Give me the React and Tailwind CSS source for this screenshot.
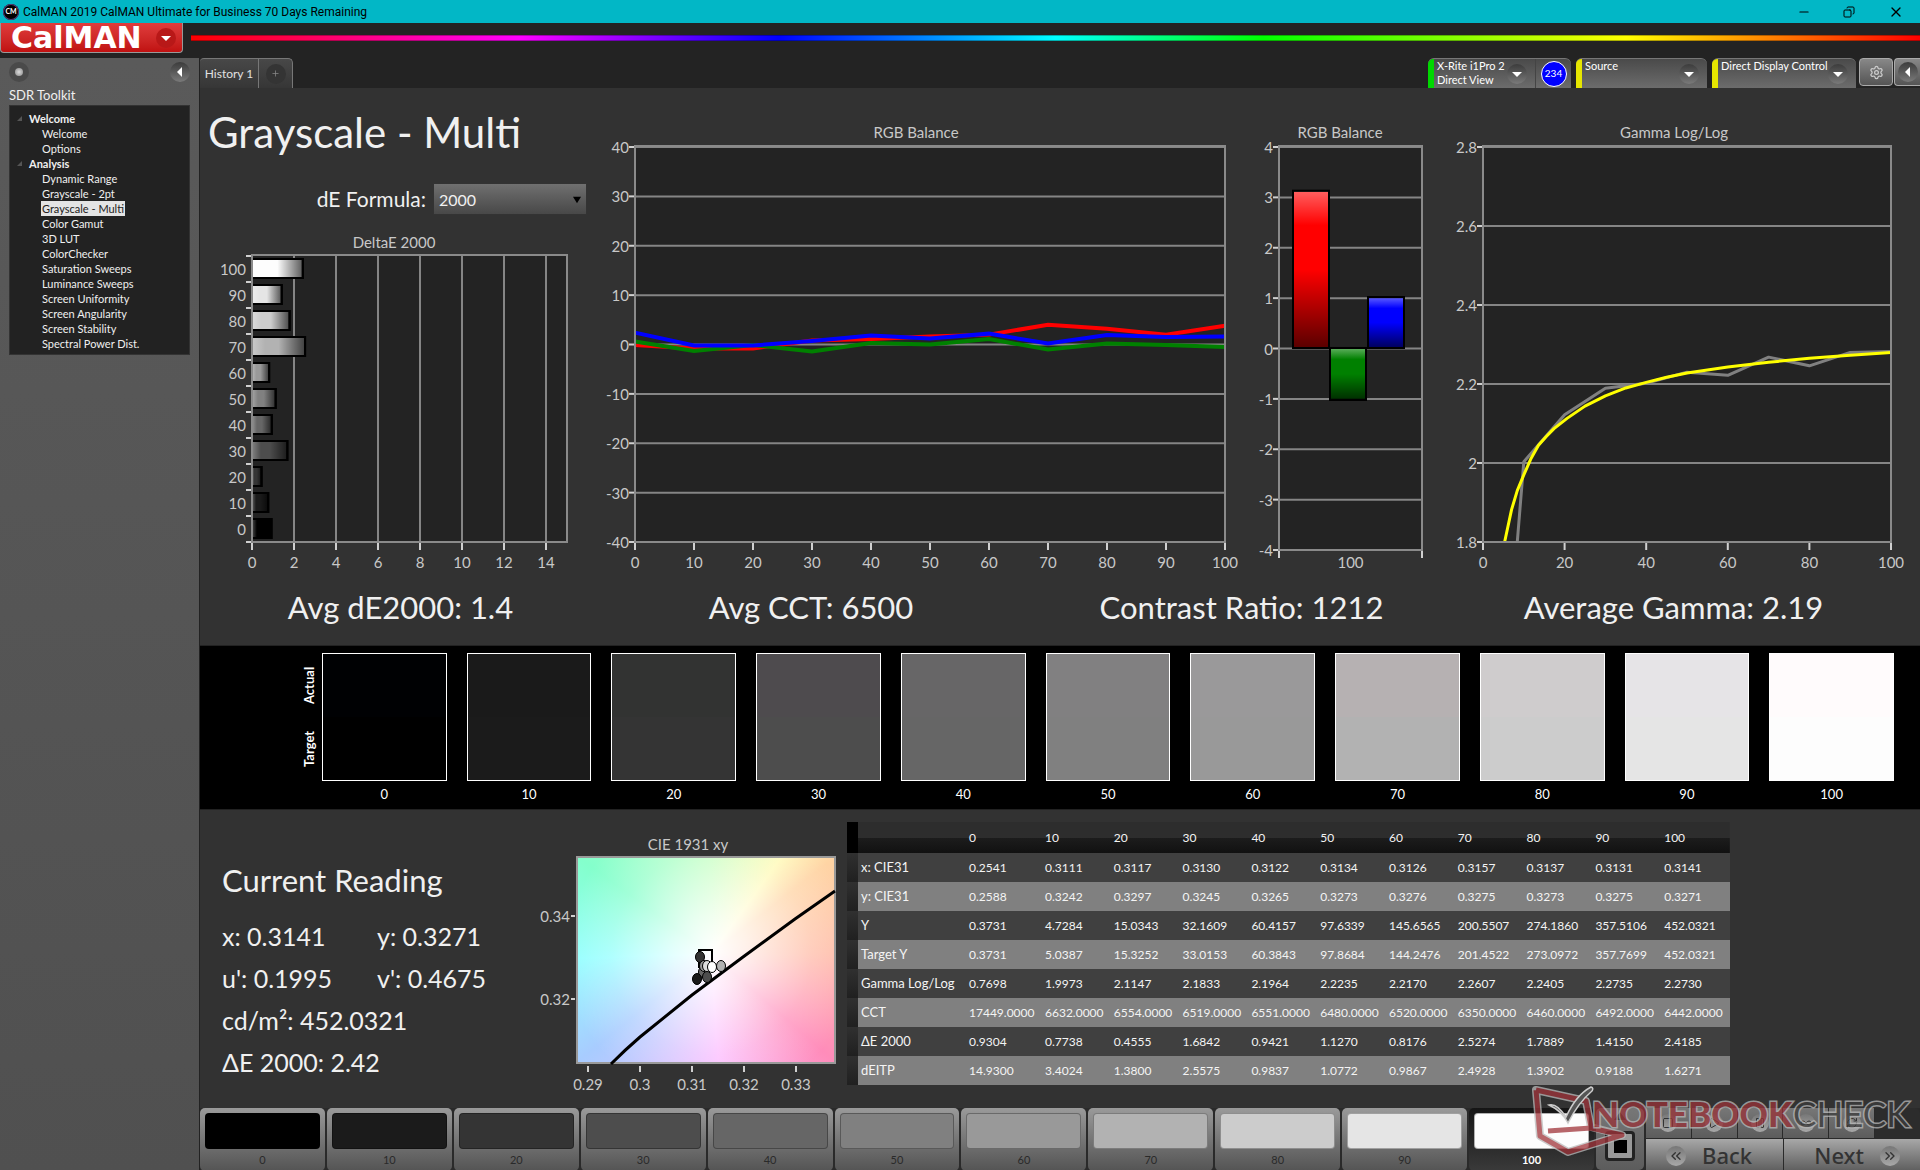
import React, { useState } from "react";
import {
  ChevronsLeft,
  ChevronsRight,
  Copy,
  Infinity as Loop,
  Minus,
  Pause,
  Play,
  Plus,
  RefreshCw,
  Settings,
  Square,
  X,
} from "lucide-react";

const tree = [
  { name: "Welcome", items: ["Welcome", "Options"] },
  {
    name: "Analysis",
    items: [
      "Dynamic Range",
      "Grayscale - 2pt",
      "Grayscale - Multi",
      "Color Gamut",
      "3D LUT",
      "ColorChecker",
      "Saturation Sweeps",
      "Luminance Sweeps",
      "Screen Uniformity",
      "Screen Angularity",
      "Screen Stability",
      "Spectral Power Dist.",
    ],
  },
];

const levels = [
  { level: 0, actual: "#000103", target: "#000000", de: 0.9304 },
  { level: 10, actual: "#1a1a1a", target: "#1b1b1b", de: 0.7738 },
  { level: 20, actual: "#323332", target: "#343434", de: 0.4555 },
  { level: 30, actual: "#4e4b4e", target: "#4d4d4d", de: 1.6842 },
  { level: 40, actual: "#676667", target: "#666666", de: 0.9421 },
  { level: 50, actual: "#818081", target: "#808080", de: 1.127 },
  { level: 60, actual: "#9a999a", target: "#999999", de: 0.8176 },
  { level: 70, actual: "#b6b1b2", target: "#b2b2b2", de: 2.5274 },
  { level: 80, actual: "#cfcccd", target: "#cccccc", de: 1.7889 },
  { level: 90, actual: "#e6e4e7", target: "#e5e5e5", de: 1.415 },
  { level: 100, actual: "#fffbfc", target: "#fdfdfd", de: 2.4185 },
];

const rows = [
  ["x: CIE31", "0.2541", "0.3111", "0.3117", "0.3130", "0.3122", "0.3134", "0.3126", "0.3157", "0.3137", "0.3131", "0.3141"],
  ["y: CIE31", "0.2588", "0.3242", "0.3297", "0.3245", "0.3265", "0.3273", "0.3276", "0.3275", "0.3273", "0.3275", "0.3271"],
  ["Y", "0.3731", "4.7284", "15.0343", "32.1609", "60.4157", "97.6339", "145.6565", "200.5507", "274.1860", "357.5106", "452.0321"],
  ["Target Y", "0.3731", "5.0387", "15.3252", "33.0153", "60.3843", "97.8684", "144.2476", "201.4522", "273.0972", "357.7699", "452.0321"],
  ["Gamma Log/Log", "0.7698", "1.9973", "2.1147", "2.1833", "2.1964", "2.2235", "2.2170", "2.2607", "2.2405", "2.2735", "2.2730"],
  ["CCT", "17449.0000", "6632.0000", "6554.0000", "6519.0000", "6551.0000", "6480.0000", "6520.0000", "6350.0000", "6460.0000", "6492.0000", "6442.0000"],
  ["ΔE 2000", "0.9304", "0.7738", "0.4555", "1.6842", "0.9421", "1.1270", "0.8176", "2.5274", "1.7889", "1.4150", "2.4185"],
  ["dEITP", "14.9300", "3.4024", "1.3800", "2.5575", "0.9837", "1.0772", "0.9867", "2.4928", "1.3902", "0.9188", "1.6271"],
];

const balance = [
  { color: "#ff0000", values: [-0.1, -0.8, -0.8, 0.8, 1.1, 1.6, 2, 4, 3.2, 2, 3.8] },
  { color: "#008000", values: [0.6, -1.3, -0.1, -1.4, 0.3, 0, 1.1, -1, 0.2, -0.1, -0.5] },
  { color: "#0000ff", values: [2.4, -0.2, -0.2, 0.7, 1.8, 1.2, 2.2, 0.2, 1.9, 1.5, 1.6] },
];

const gammaTarget = [
  [5.3, 1.8], [7, 1.882], [8.4, 1.93], [10, 1.97], [11.7, 2.01], [13.6, 2.045], [15.4, 2.066], [17.4, 2.087],
  [20.6, 2.113], [25, 2.144], [30, 2.17], [35, 2.19], [40, 2.204], [45, 2.217], [50, 2.228], [60, 2.243],
  [70, 2.255], [80, 2.265], [90, 2.273], [100, 2.28],
];
const gammaMeasured = [
  [8.4, 1.8], [10, 2.003], [20, 2.122], [30, 2.189], [40, 2.202], [50, 2.23], [60, 2.222],
  [70, 2.268], [80, 2.246], [90, 2.28], [100, 2.282],
];

const range = (from, to, step) => {
  const out = [];
  for (let v = from; v <= to + step / 1000; v += step) out.push(Math.round(v * 100) / 100);
  return out;
};

function Chart({ w, h, title, titleX, plot, x, y, labelY, children }) {
  const [px, py, pw, ph] = plot;
  const sx = (v) => px + ((v - x.min) / (x.max - x.min)) * pw;
  const sy = (v) => py + ph - ((v - y.min) / (y.max - y.min)) * ph;

  return (
    <svg viewBox={`0 0 ${w} ${h}`} className="w-full h-auto block" role="img" aria-label={title}>
      <defs>
        <linearGradient id="shineX">
          <stop offset="0" stopColor="#fff" stopOpacity="0.3" />
          <stop offset="0.25" stopColor="#fff" stopOpacity="0" />
          <stop offset="0.5" stopColor="#000" stopOpacity="0" />
          <stop offset="1" stopColor="#000" stopOpacity="0.65" />
        </linearGradient>
        <linearGradient id="shineY" x2="0" y2="1">
          <stop offset="0" stopColor="#fff" stopOpacity="0.38" />
          <stop offset="0.22" stopColor="#fff" stopOpacity="0" />
          <stop offset="0.5" stopColor="#000" stopOpacity="0" />
          <stop offset="1" stopColor="#000" stopOpacity="0.65" />
        </linearGradient>
      </defs>
      <text x={titleX} y="18" textAnchor="middle" fontSize="15" fill="#c8c8c8">
        {title}
      </text>
      <rect x={px} y={py} width={pw} height={ph} fill="#232323" />
      <g stroke="#858585" strokeWidth="2">
        {x.grid && x.ticks.map((v) => <path key={v} d={`M${sx(v)} ${py}V${py + ph}`} />)}
        {y.grid && y.ticks.map((v) => <path key={v} d={`M${px} ${sy(v)}H${px + pw}`} />)}
      </g>
      {children(sx, sy)}
      <rect x={px} y={py - 1} width={pw} height={ph + 1} fill="none" stroke="#8a8a8a" strokeWidth="2" />
      <g stroke="#d0d0d0" strokeWidth="2">
        {(x.marks ?? x.ticks).map((v) => <path key={v} d={`M${sx(v)} ${py + ph + 1}v7`} />)}
        {(y.marks ?? y.ticks).map((v) => <path key={v} d={`M${px - 1} ${sy(v)}h-5`} />)}
      </g>
      <g fontSize="15" fill="#c8c8c8">
        {x.ticks.map((v) => (
          <text key={v} x={sx(v)} y={labelY} textAnchor="middle">{v}</text>
        ))}
        {y.ticks.map((v) => (
          <text key={v} x={px - 6} y={sy(v) + 6} textAnchor="end">{v}</text>
        ))}
      </g>
    </svg>
  );
}

function DeltaChart() {
  return (
    <Chart
      w={390} h={350} title="DeltaE 2000" titleX={194} plot={[52, 26, 315, 286]} labelY={338}
      x={{ min: 0, max: 15, ticks: range(0, 14, 2), grid: true }}
      y={{ min: -5, max: 105, ticks: range(0, 100, 10), marks: range(-5, 105, 10) }}
    >
      {(sx, sy) =>
        levels.map(({ level, target, de }) => (
          <g key={level} stroke="#000" strokeWidth="2">
            <rect x={sx(0)} y={sy(level) - 10} width={sx(de) - sx(0)} height="19" fill={target} />
            <rect x={sx(0)} y={sy(level) - 10} width={sx(de) - sx(0)} height="19" fill="url(#shineX)" />
          </g>
        ))
      }
    </Chart>
  );
}

function BalanceChart() {
  return (
    <Chart
      w={650} h={460} title="RGB Balance" titleX={326} plot={[45, 27, 590, 395]} labelY={448}
      x={{ min: 0, max: 100, ticks: range(0, 100, 10) }}
      y={{ min: -40, max: 40, ticks: range(-40, 40, 10), grid: true }}
    >
      {(sx, sy) =>
        balance.map(({ color, values }) => (
          <polyline
            key={color}
            points={values.map((v, i) => `${sx(i * 10)},${sy(v)}`).join(" ")}
            fill="none" stroke={color} strokeWidth="4"
          />
        ))
      }
    </Chart>
  );
}

function BalanceBars() {
  const bars = [
    { color: "#ff0000", from: 3.13, to: 0.01, at: 14 },
    { color: "#008000", from: 0.01, to: -1.02, at: 51 },
    { color: "#0000ff", from: 1.02, to: 0.01, at: 89 },
  ];
  return (
    <Chart
      w={200} h={460} title="RGB Balance" titleX={100} plot={[39, 27, 143, 403]} labelY={448}
      x={{ min: 99, max: 101, ticks: [100], marks: [99, 101] }}
      y={{ min: -4, max: 4, ticks: range(-4, 4, 1), grid: true }}
    >
      {(sx, sy) =>
        bars.map(({ color, from, to, at }) => (
          <g key={color} stroke="#000" strokeWidth="2">
            <rect x={39 + at} y={sy(from)} width="36" height={sy(to) - sy(from)} fill={color} />
            <rect x={39 + at} y={sy(from)} width="36" height={sy(to) - sy(from)} fill="url(#shineY)" />
          </g>
        ))
      }
    </Chart>
  );
}

function GammaChart() {
  return (
    <Chart
      w={480} h={460} title="Gamma Log/Log" titleX={234} plot={[43, 27, 408, 395]} labelY={448}
      x={{ min: 0, max: 100, ticks: range(0, 100, 20) }}
      y={{ min: 1.8, max: 2.8, ticks: range(1.8, 2.8, 0.2), grid: true }}
    >
      {(sx, sy) => (
        <g fill="none" strokeWidth="3" strokeLinejoin="round">
          <polyline points={gammaMeasured.map(([a, b]) => `${sx(a)},${sy(b)}`).join(" ")} stroke="#808080" />
          <polyline points={gammaTarget.map(([a, b]) => `${sx(a)},${sy(b)}`).join(" ")} stroke="#ffff00" />
        </g>
      )}
    </Chart>
  );
}

function CieChart() {
  const points = [
    [173, 142, "#666"], [177, 147, "#4d4d4d"], [167, 149, "#1a1a1a"], [170, 127, "#333"],
    [174, 136, "#999"], [191, 136, "#b2b2b2"], [177, 136, "#ddd"], [182, 137, "#fff"],
  ];
  return (
    <svg viewBox="0 0 317 270" className="w-full h-auto block" role="img" aria-label="CIE 1931 xy">
      <text x="158" y="20" textAnchor="middle" fontSize="15" fill="#c8c8c8">CIE 1931 xy</text>
      <foreignObject x="47" y="27" width="258" height="206">
        <div className="h-full bg-[radial-gradient(circle_at_52%_47%,#fff_0%,rgba(255,255,255,0.75)_22%,rgba(255,255,255,0.25)_58%,transparent_85%),conic-gradient(from_0deg_at_52%_47%,#c4ffc0,#fffab8_36deg,#ffd4a4_52deg,#ffbca8_90deg,#ff8cba_131deg,#fcbcff_176deg,#a8ccff_231deg,#94ffff_268deg,#84ffcc_306deg,#c4ffc0)]" />
      </foreignObject>
      <rect x="47" y="27" width="258" height="206" fill="none" stroke="#999" strokeWidth="2" />
      <path d="M81 234Q96 219 110 207L162 165L213 127L265 89L305 61" fill="none" stroke="#000" strokeWidth="3" />
      <rect x="169" y="120" width="13" height="17" fill="none" stroke="#000" strokeWidth="2" />
      {points.map(([cx, cy, fill]) => (
        <ellipse key={`${cx}-${cy}`} cx={cx} cy={cy} rx="4.5" ry="5.5" fill={fill} stroke="#000" />
      ))}
      <path d="M45 86h-4M45 169h-4M58 236v6M110 236v6M162 236v6M214 236v6M266 236v6" stroke="#d0d0d0" strokeWidth="2" />
      <g fontSize="15" fill="#c8c8c8">
        <text x="40" y="92" textAnchor="end">0.34</text>
        <text x="40" y="175" textAnchor="end">0.32</text>
        {["0.29", "0.3", "0.31", "0.32", "0.33"].map((label, i) => (
          <text key={label} x={58 + i * 52} y="260" textAnchor="middle">{label}</text>
        ))}
      </g>
    </svg>
  );
}

function Arrow({ left }) {
  return (
    <span className="flex shrink-0 size-5 items-center justify-center rounded-full bg-linear-to-b from-[#3c3c3c] to-[#7a7a7a]">
      <svg viewBox="0 0 10 10" className="size-[10px]" fill="#fff">
        <path d={left ? "M7 0V10L2 5Z" : "M0 3H10L5 8Z"} />
      </svg>
    </span>
  );
}

function TitleBar() {
  return (
    <header className="flex h-[23px] items-center bg-[#02b7c6] pl-[3px] text-black">
      <span className="flex size-4 items-center justify-center rounded-full bg-black text-[7px] font-bold text-white ring-1 ring-[#5a3d7a] ring-inset">
        CM
      </span>
      <h1 className="ml-1 flex-1 font-['Roboto',sans-serif] text-[12px]">
        CalMAN 2019 CalMAN Ultimate for Business 70 Days Remaining
      </h1>
      <button aria-label="Minimize" className="flex w-[45px] justify-center"><Minus size={14} strokeWidth={2} /></button>
      <button aria-label="Restore" className="flex w-[45px] justify-center"><Copy size={12} strokeWidth={2} className="-scale-x-100" /></button>
      <button aria-label="Close" className="flex w-[49px] justify-center"><X size={16} strokeWidth={2} /></button>
    </header>
  );
}

function Device({ color, label, sub, width, children }) {
  return (
    <div className={`flex h-[30px] overflow-hidden rounded-t-md border-t border-[#777] bg-linear-to-b from-[#4a4a4a] to-[#6c6c6c] ${width}`}>
      <span className={`w-[6px] shrink-0 ${color}`} />
      <button className="flex flex-1 items-center justify-between pl-[3px] pr-2 text-left">
        <span className="self-start text-[11px] leading-[14px] whitespace-nowrap text-white">
          {label}
          <br />
          {sub}
        </span>
        <Arrow />
      </button>
      {children}
    </div>
  );
}

function Sidebar({ page, setPage }) {
  return (
    <aside className="w-[200px] shrink-0 border-r border-[#222] bg-linear-to-b from-[#5a5a5a] to-[#505050] px-[9px] pt-1 text-[#f0f0f0]">
      <div className="flex items-center justify-between">
        <button aria-label="Record" className="flex size-5 items-center justify-center rounded-full bg-[#4a4a4a]">
          <span className="size-2 rounded-full bg-radial from-[#ddd] to-[#888]" />
        </button>
        <button aria-label="Collapse"><Arrow left /></button>
      </div>
      <h2 className="mt-1 text-[13px] leading-[19px]">SDR Toolkit</h2>
      <nav className="h-[250px] border border-[#333] bg-[#222] pt-[5px] text-[11px] leading-[15px]">
        {tree.map(({ name, items }) => (
          <div key={name}>
            <h3 className="flex items-center font-bold">
              <svg viewBox="0 0 5 5" className="mx-[7px] size-[5px]" fill="#555"><path d="M5 0V5H0Z" /></svg>
              {name}
            </h3>
            <ul className="pl-[31px]">
              {items.map((item) => (
                <li key={item} className="flex h-[15px]">
                  <a
                    href="#page"
                    onClick={() => setPage(item)}
                    className={`px-px whitespace-nowrap ${item === page ? "bg-[#e4e4e4] text-[#222]" : ""}`}
                  >
                    {item}
                  </a>
                </li>
              ))}
            </ul>
          </div>
        ))}
      </nav>
    </aside>
  );
}

function Swatches() {
  return (
    <section className="flex h-[165px] gap-[4px] border-y border-[#222] bg-black pt-[7px] pr-[26px] pl-[100px] text-white">
      <div className="flex h-[128px] w-[18px] rotate-180 justify-around text-[13px] leading-[18px] font-bold [writing-mode:vertical-rl]">
        <span>Target</span>
        <span>Actual</span>
      </div>
      <div className="grid flex-1 grid-cols-11 gap-5">
        {levels.map(({ level, actual, target }) => (
          <figure key={level}>
            <div className="h-[128px] border border-white">
              <div className="h-1/2" style={{ background: actual }} />
              <div className="h-1/2" style={{ background: target }} />
            </div>
            <figcaption className="pt-[4px] text-center text-[13px] leading-[18px]">{level}</figcaption>
          </figure>
        ))}
      </div>
    </section>
  );
}

function Reading() {
  return (
    <div className="pt-[49px] pl-[22px] text-[25px] leading-[42px] text-[#f0f0f0]">
      <h2 className="mb-[14px] text-[31px]">Current Reading</h2>
      <div className="grid grid-cols-[155px_1fr] whitespace-nowrap">
        <span>x: 0.3141</span>
        <span>y: 0.3271</span>
        <span>u': 0.1995</span>
        <span>v': 0.4675</span>
      </div>
      <p>cd/m²: 452.0321</p>
      <p>ΔE 2000: 2.42</p>
    </div>
  );
}

function DataTable() {
  return (
    <table className="mt-[12px] w-full table-fixed self-start text-left text-[12px] whitespace-nowrap text-[#f4f4f4]">
      <colgroup>
        <col className="w-[11px]" />
        <col className="w-[108px]" />
        <col className="w-[76px]" />
      </colgroup>
      <thead>
        <tr className="h-[31px] bg-[linear-gradient(#2d2d2d_50%,#1c1c1c_52%,#111)]">
          <td className="bg-black" />
          <td />
          {levels.map(({ level }) => (
            <th key={level} scope="col" className="pl-[3px] font-normal">{level}</th>
          ))}
        </tr>
      </thead>
      <tbody>
        {rows.map(([name, ...values]) => (
          <tr key={name} className="h-[29px] odd:bg-[#404040] even:bg-[#808080]">
            <td className="bg-linear-to-b from-[#303030] to-[#202020]" />
            <th scope="row" className="pl-[3px] text-[13px] font-normal">{name}</th>
            {values.map((v, i) => (
              <td key={i} className="pl-[3px]">{v}</td>
            ))}
          </tr>
        ))}
      </tbody>
    </table>
  );
}

function Watermark() {
  return (
    <svg viewBox="0 0 390 77" className="pointer-events-none absolute right-0 bottom-[10px] w-[390px]" aria-label="Notebookcheck">
      <g fill="none" strokeLinejoin="round" opacity="0.75">
        <path d="M6 7L56 18L61 44L92 52L38 69L10 53Z" stroke="#bbb" strokeWidth="8" />
        <path d="M6 7L56 18L61 44M6 7L10 53L38 69L92 52L61 45L18 48" stroke="#a0343a" strokeWidth="5" />
      </g>
      <path d="M19 22Q27 20 36 34Q46 12 61 4Q64 5 62 8Q48 20 38 40Q32 28 19 22Z" fill="#555" stroke="#ccc" strokeWidth="1.5" />
      <g fontSize="35" stroke="#b8b8b8" strokeWidth="3" paintOrder="stroke">
        <text x="62" y="44" fontWeight="900" fill="#993238" opacity="0.75">NOTEBOOK</text>
        <text x="263" y="44" fill="#3c3c3c" opacity="0.75">CHECK</text>
      </g>
    </svg>
  );
}

function RoundIcon({ icon: Icon, size = 12, big }) {
  return (
    <span className={`flex items-center justify-center rounded-full bg-linear-to-b from-[#777] to-[#a8a8a8] text-[#333] ${big ? "size-5" : "size-[18px]"}`}>
      <Icon size={size} />
    </span>
  );
}

function Toolbar() {
  const [level, setLevel] = useState(100);
  const controls = [
    ["Stop", Square],
    ["Play", Play],
    ["Pause", Pause],
    ["Loop", Loop],
    ["Refresh", RefreshCw],
  ];
  return (
    <footer className="relative flex h-[62px] bg-[#2a2a2a]">
      <div className="grid flex-1 grid-cols-11 gap-[2px]">
        {levels.map(({ level: l, target }) => (
          <button
            key={l}
            onClick={() => setLevel(l)}
            className={`flex flex-col rounded-[5px] px-[5px] pt-[5px] text-[11px] leading-[22px] ${
              l === level
                ? "bg-linear-to-b from-[#151515] to-[#3a3a3a] font-bold text-white"
                : "bg-linear-to-b from-[#9a9a9a] to-[#545454] text-[#2a2a2a]"
            }`}
          >
            <span className="h-9 w-full rounded-[4px] border border-black/30" style={{ background: target }} />
            <span className="w-full text-center">{l}</span>
          </button>
        ))}
      </div>
      <div className="ml-[2px] flex w-[48px] flex-col items-center gap-[11px] rounded-[5px] bg-linear-to-b from-[#777] to-[#5c5c5c] pt-1">
        <svg viewBox="0 0 12 8" className="h-2 w-3" fill="#333"><path d="M6 0L12 8H0Z" /></svg>
        <button aria-label="Read" className="flex size-[30px] items-center justify-center rounded-[4px] border-[3px] border-[#222] bg-[#999]">
          <span className="size-[13px] bg-black" />
        </button>
      </div>
      <div className="ml-[2px] flex w-[274px] flex-col gap-px">
        <div className="grid h-[30px] grid-cols-6 gap-px">
          {controls.map(([name, icon]) => (
            <button key={name} aria-label={name} className="flex items-center justify-center bg-linear-to-b from-[#777] to-[#5c5c5c]">
              <RoundIcon icon={icon} />
            </button>
          ))}
          <span className="rounded-tr-[5px] bg-[#2c2c2c]" />
        </div>
        <div className="grid h-[30px] grid-cols-2 gap-px font-['Noto_Sans',sans-serif] text-[22px] font-medium text-[#333]">
          <button className="flex items-center gap-4 bg-linear-to-b from-[#a8a8a8] to-[#5c5c5c] pl-5">
            <RoundIcon icon={ChevronsLeft} size={16} big />
            Back
          </button>
          <button className="flex items-center justify-end gap-4 bg-linear-to-b from-[#a8a8a8] to-[#5c5c5c] pr-5">
            Next
            <RoundIcon icon={ChevronsRight} size={16} big />
          </button>
        </div>
      </div>
      <Watermark />
    </footer>
  );
}

export default function App() {
  const [page, setPage] = useState("Grayscale - Multi");
  const [formula, setFormula] = useState("2000");

  return (
    <div className="flex min-h-screen flex-col bg-[#232323] font-[Lato,'Open_Sans',sans-serif]">
      <TitleBar />
      <div className="flex h-[35px] items-start gap-2">
        <button className="flex h-[30px] w-[183px] items-center justify-between rounded-b-[4px] border border-t-0 border-[#999] bg-linear-to-b from-[#e03c3c] to-[#c01010] pr-[6px] pl-[10px] font-['DejaVu_Sans',sans-serif] text-[30px] leading-none font-bold text-white">
          CalMAN
          <span className="flex size-5 items-center justify-center rounded-full bg-[#b81818]">
            <svg viewBox="0 0 10 10" className="size-[10px]" fill="#fff"><path d="M0 3H10L5 8Z" /></svg>
          </span>
        </button>
        <div className="mt-3 h-[6px] flex-1 border-y border-black/30 bg-[linear-gradient(90deg,#f00,#f0f_19%,#00f_34%,#0ff_50%,#0f0_62%,#ff0_83%,#f00)]" />
      </div>

      <div className="flex flex-1">
        <Sidebar page={page} setPage={setPage} />
        <main className="flex min-w-0 flex-1 flex-col bg-[#323232]">
          <div className="flex h-[30px] bg-[#232323] text-[12px] text-[#e0e0e0]">
            <button className="w-[59px] rounded-tl-[4px] border-t border-r border-[#777] bg-linear-to-b from-[#484848] to-[#363636] whitespace-nowrap">
              History 1
            </button>
            <button aria-label="Add tab" className="flex w-[34px] items-center justify-center rounded-tr-[5px] border-t border-r border-[#777] bg-linear-to-b from-[#484848] to-[#363636]">
              <span className="flex size-5 items-center justify-center rounded-full bg-[#343434] text-[#888]">
                <Plus size={9} />
              </span>
            </button>
            <div className="ml-auto flex gap-[3px]">
              <div className="flex gap-[5px]">
                <Device color="bg-[#00d800]" label="X-Rite i1Pro 2" sub="Direct View" width="w-[143px]">
                  <span className="flex w-9 items-center justify-center border-l border-[#444]">
                    <span className="flex size-[26px] items-center justify-center rounded-full border border-white bg-[#0000ff] text-[10px] text-white">
                      234
                    </span>
                  </span>
                </Device>
                <Device color="bg-[#e6e600]" label="Source" width="w-[131px]" />
                <Device color="bg-[#e6e600]" label="Direct Display Control" width="w-[144px]" />
              </div>
              <div className="flex gap-px">
                <button aria-label="Settings" className="flex h-[28px] w-[34px] items-center justify-center rounded-[4px] border border-[#aaa] bg-linear-to-b from-[#888] to-[#555] text-[#ccc]">
                  <Settings size={15} />
                </button>
                <button aria-label="Expand" className="flex h-[28px] w-[26px] items-center justify-center rounded-l-[4px] border border-r-0 border-[#aaa] bg-linear-to-b from-[#888] to-[#555]">
                  <Arrow left />
                </button>
              </div>
            </div>
          </div>

          <section className="grid grid-cols-[390fr_650fr_200fr_480fr]">
            <div>
              <h1 className="pt-[20px] pl-[8px] text-[42px] leading-[48px] whitespace-nowrap text-[#f0f0f0]">
                Grayscale - Multi
              </h1>
              <div className="mt-[27px] mb-[15px] flex h-8 items-center justify-end gap-[7px] pr-[3px] text-[#f0f0f0]">
                <label htmlFor="formula" className="text-[21px] whitespace-nowrap">dE Formula:</label>
                <div className="relative h-full w-[154px]">
                  <select
                    id="formula"
                    value={formula}
                    onChange={(e) => setFormula(e.target.value)}
                    className="h-full w-full appearance-none border border-[#333] bg-linear-to-b from-[#707070] to-[#484848] pt-[2px] pl-[5px] text-[16px]"
                  >
                    <option>2000</option>
                    <option>1994</option>
                    <option>uv</option>
                  </select>
                  <svg viewBox="0 0 10 8" className="pointer-events-none absolute top-[13px] right-[6px] h-2 w-[8px]" fill="#000">
                    <path d="M0 0H10L5 8Z" />
                  </svg>
                </div>
              </div>
              <DeltaChart />
            </div>
            <div className="pt-8"><BalanceChart /></div>
            <div className="pt-8"><BalanceBars /></div>
            <div className="pt-8"><GammaChart /></div>
          </section>

          <section className="grid grid-cols-[401fr_420fr_441fr_423fr] pt-[7px] pr-[35px] pb-[18px] text-center text-[31px] leading-10 whitespace-nowrap text-[#f0f0f0]">
            <p>Avg dE2000: 1.4</p>
            <p>Avg CCT: 6500</p>
            <p>Contrast Ratio: 1212</p>
            <p>Average Gamma: 2.19</p>
          </section>

          <Swatches />

          <section className="grid flex-1 grid-cols-[330fr_317fr_883fr_190fr]">
            <Reading />
            <div className="pt-5"><CieChart /></div>
            <DataTable />
          </section>

          <Toolbar />
        </main>
      </div>
    </div>
  );
}
